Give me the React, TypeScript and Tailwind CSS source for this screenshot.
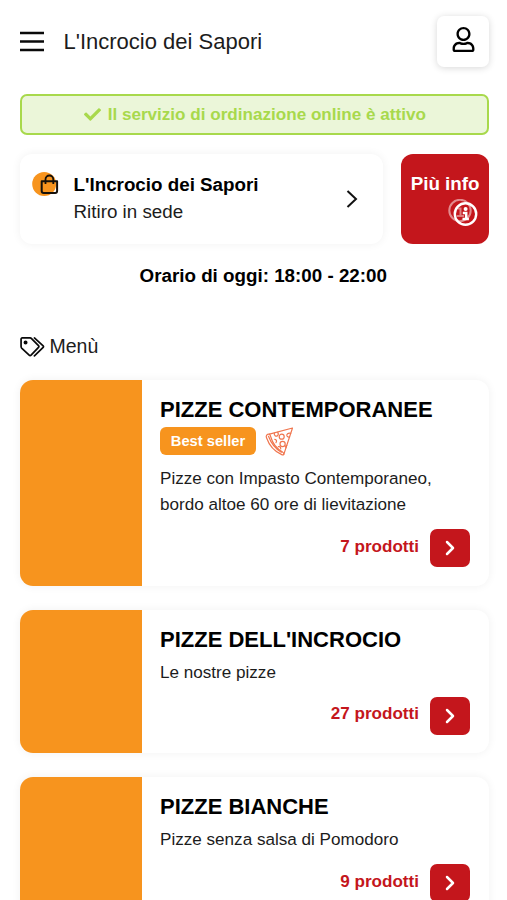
import { FaRegUser, FaCheck } from "react-icons/fa";

const categories = [
  {
    id: 1,
    name: "PIZZE CONTEMPORANEE",
    description: "Pizze con Impasto Contemporaneo, bordo altoe 60 ore di lievitazione",
    products: 7,
    bestSeller: true,
  },
  { id: 2, name: "PIZZE DELL'INCROCIO", description: "Le nostre pizze", products: 27, bestSeller: false },
  { id: 3, name: "PIZZE BIANCHE", description: "Pizze senza salsa di Pomodoro", products: 9, bestSeller: false },
];

function BagIcon() {
  return (
    <svg width="28" height="26" viewBox="0 0 28 26" fill="none">
      <circle cx="12.2" cy="13" r="12" fill="#f7941e" />
      <path d="M9.7 10.3h15.4v9.7a2 2 0 0 1-2 2H11.7a2 2 0 0 1-2-2z" stroke="#15100a" strokeWidth="2" strokeLinejoin="round" />
      <path d="M13.5 13V8.4a3.9 3.9 0 0 1 7.8 0V13" stroke="#15100a" strokeWidth="1.8" />
    </svg>
  );
}

function InfoIcon() {
  return (
    <svg width="30" height="29" viewBox="0 0 30 29" fill="none">
      <circle cx="12" cy="11.5" r="10.7" stroke="#fff" strokeWidth="2" opacity="0.5" />
      <path d="M9.5 9.5h3v7M9 17h7" stroke="#fff" strokeWidth="2" opacity="0.45" />
      <circle cx="17.5" cy="15" r="10.7" stroke="#fff" strokeWidth="2.4" />
      <circle cx="17.6" cy="10" r="2" fill="#fff" />
      <path d="M14.8 13.9h3.4v6M14.5 20h6.4" stroke="#fff" strokeWidth="2.5" />
    </svg>
  );
}

function TagsIcon() {
  return (
    <svg width="25" height="20" viewBox="0 0 26 21" fill="none" stroke="#0a0a0a" strokeWidth="1.8" strokeLinejoin="round" strokeLinecap="round">
      <path d="M1 2.2A1.2 1.2 0 0 1 2.2 1h8.3c.6 0 1.1.2 1.5.6l7.3 7.5c.6.6.6 1.3 0 1.9l-7.8 8c-.6.6-1.4.6-2 0L1.6 11.6c-.4-.4-.6-.9-.6-1.500z" />
      <path d="M15 1l9.200 8.300c.5.500.5 1.100 0 1.600L15 19.800" />
      <circle cx="5.700" cy="5.800" r="1.200" fill="#0a0a0a" />
    </svg>
  );
}

function PizzaIcon() {
  return (
    <svg width="29" height="29" viewBox="0 0 29 29" fill="none" stroke="#f0764f" strokeWidth="1.2" strokeLinejoin="round" strokeLinecap="round">
      <path d="M4.5 7.2 27.5 1 18.8 27.4" />
      <path d="M4.5 7.2C2 6.8.6 8.6 1.5 10.8c2.7 7.7 8 13.7 15.2 16.8 1.2.5 2 .4 2.1-.2.3-1-.3-1.8-1.3-2.4C11.6 21.5 7.6 16.5 6 10.5c-.4-1.5-.7-2.7-1.5-3.3z" />
      <path d="M3.500 9.300C6 16 10 21.600 16.300 25.300" />
      <circle cx="16.700" cy="9.700" r="2.500" />
      <circle cx="17.600" cy="17" r="2.600" />
      <path d="M9.300 6.200c-.4 2.300 1.600 3.700 3.200 2.500.9-.7 1-2 .3-3.300M25.700 6.300c-2.700-.8-4.500 1-3.700 2.700.5 1 1.500 1.300 2.600 1M9.800 12.300c1.700.2 2.300 2 1.200 3.200M21.800 18.300c-1.300.2-1.600 1.600-.6 2.400M13.400 19.700c1.500-.4 2.500.6 2.300 2.200" />
    </svg>
  );
}

function CategoryCard({ category }: { category: (typeof categories)[number] }) {
  return (
    <div className="flex overflow-hidden rounded-[13px] bg-white shadow-[0_0_10px_rgba(0,0,0,0.06)]">
      <div className="w-[122.5px] shrink-0 bg-[#f7941e]" />
      <div className="flex min-w-0 flex-1 flex-col pt-4 pr-[19px] pb-[18.7px] pl-[18px]">
        <h2 className="text-[22px] leading-[27px] font-bold whitespace-nowrap">{category.name}</h2>
        {category.bestSeller ? (
          <div className="mt-1 mb-1 flex h-7 items-center gap-[9px]">
            <span className="flex h-7 w-24 items-center justify-center rounded-[6px] bg-[#f7941e] text-[14.7px] leading-none font-bold text-white">
              Best seller
            </span>
            <PizzaIcon />
          </div>
        ) : null}
        <p className="mt-[7px] w-[290px] text-[17.1px] leading-[26px] text-[#1c1c1c]">{category.description}</p>
        <div className="mt-[11px] flex items-center justify-end gap-[11px]">
          <span className="pb-[3px] text-[17.1px] leading-5 font-bold text-[#c4161c]">{category.products} prodotti</span>
          <button className="flex h-[38px] w-10 items-center justify-center rounded-[7px] bg-[#c4161c]">
            <svg width="10" height="16" viewBox="0 0 10 16" fill="none">
              <path d="m2 2 6 6-6 6" stroke="#fff" strokeWidth="2.5" strokeLinecap="round" strokeLinejoin="round" />
            </svg>
          </button>
        </div>
      </div>
    </div>
  );
}

export default function App() {
  return (
    <div className="h-[900px] w-[507px] overflow-hidden bg-white pr-[18px] pl-[19.5px] font-['Liberation_Sans',Arial,sans-serif] text-black">
      <header className="flex h-[82px] items-center">
        <button>
          <svg width="24" height="21" viewBox="0 0 24 21" fill="none" stroke="#0a0a0a" strokeWidth="2.7">
            <path d="M0 2h24M0 10.5h24M0 19h24" />
          </svg>
        </button>
        <h1 className="ml-5 pt-px text-[22px] leading-7 text-[#1c1c1c]">L'Incrocio dei Sapori</h1>
        <button className="ml-auto flex h-[51px] w-[52px] items-center justify-center rounded-[7px] bg-white pb-[3px] shadow-[0_1px_7px_rgba(0,0,0,0.16)]">
          <FaRegUser size={25} />
        </button>
      </header>

      <div className="mt-3 flex h-[41px] items-center justify-center gap-[7px] rounded-[7px] border-2 border-[#a8d94c] bg-[#ebf6d9] pl-px text-[#a8d94c]">
        <FaCheck size={17} />
        <span className="text-[17.1px] leading-5 font-bold">Il servizio di ordinazione online è attivo</span>
      </div>

      <div className="mt-[19px] flex h-[90px] gap-[18px]">
        <div className="flex w-[363.5px] items-start rounded-[12px] bg-white pt-[17px] pl-[12px] shadow-[0_0_10px_rgba(0,0,0,0.06)]">
          <BagIcon />
          <div className="ml-[14px] text-[18.8px] leading-[27px]">
            <p className="font-bold">L'Incrocio dei Sapori</p>
            <p className="text-[#1c1c1c]">Ritiro in sede</p>
          </div>
          <svg className="mt-[19px] mr-[25px] ml-auto" width="12" height="18" viewBox="0 0 12 18" fill="none">
            <path d="m1.5 1 8.5 8-8.5 8" stroke="#111" strokeWidth="2" />
          </svg>
        </div>
        <div className="flex flex-1 flex-col items-end rounded-[12px] bg-[#c4161c] pt-[17px] pr-[9.5px] text-white">
          <span className="text-[18.8px] leading-[26px] font-bold">Più info</span>
          <div className="mt-[2px] mr-[2px]">
            <InfoIcon />
          </div>
        </div>
      </div>

      <p className="mt-[18px] pl-[18px] text-center text-[18.8px] leading-[27px] font-bold">Orario di oggi: 18:00 - 22:00</p>

      <div className="mt-[44px] flex h-[27px] items-center gap-[5px]">
        <TagsIcon />
        <span className="text-[19.5px] leading-[27px] text-[#1c1c1c]">Menù</span>
      </div>

      <div className="mt-5 flex flex-col gap-6">
        {categories.map((category) => (
          <CategoryCard key={category.id} category={category} />
        ))}
      </div>
    </div>
  );
}
